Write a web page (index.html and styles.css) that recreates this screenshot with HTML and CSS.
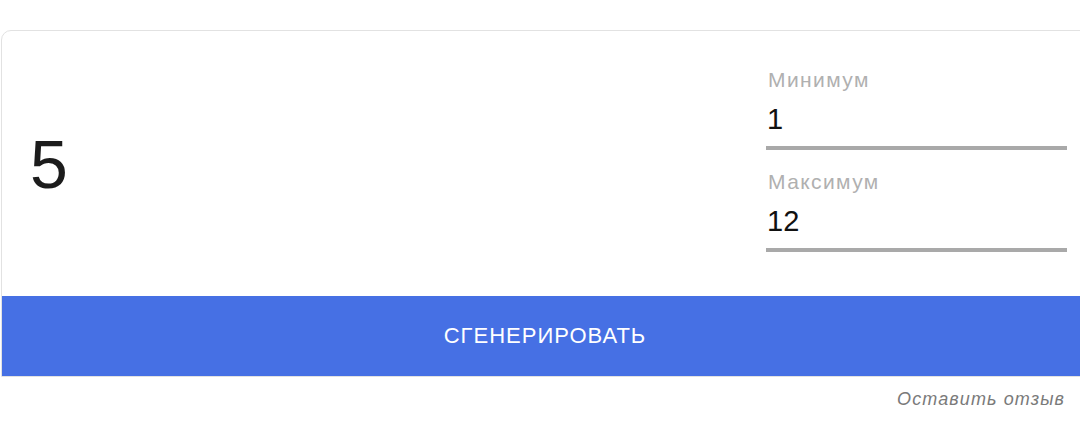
FILE: index.html
```html
<!DOCTYPE html>
<html lang="ru">
<head>
  <meta charset="UTF-8">
  <title>Генератор случайных чисел</title>
  <link rel="stylesheet" href="styles.css">
</head>
<body>

  <div class="page">
    <div class="card">
      <div class="card-body">
        <div class="result" id="result">5</div>

        <div class="range">
          <label class="field">
            <span class="field-label">Минимум</span>
            <input type="text" id="min" value="1">
          </label>
          <label class="field">
            <span class="field-label">Максимум</span>
            <input type="text" id="max" value="12">
          </label>
        </div>
      </div>

      <button class="generate" onclick="generate()">СГЕНЕРИРОВАТЬ</button>
    </div>

    <div class="feedback">
      <a href="#">Оставить отзыв</a>
    </div>
  </div>

  <script>
    function generate() {
      let min = parseInt(document.getElementById("min").value, 10);
      let max = parseInt(document.getElementById("max").value, 10);

      if (isNaN(min) || isNaN(max) || min > max) {
        return;
      }

      let value = Math.floor(Math.random() * (max - min + 1)) + min;
      document.getElementById("result").innerText = value;
    }
  </script>

</body>
</html>
```

FILE: styles.css
```css
html, body {
  margin: 0;
  background: #ffffff;
  overflow: hidden;
}

body {
  font-family: "Liberation Sans", Arial, sans-serif;
  color: #1a1a1a;
}

.page {
  width: 1140px;
  padding-top: 30px;
  padding-left: 1px;
}

.card {
  border: 1px solid #e2e2e2;
  border-radius: 10px 10px 0 0;
  overflow: hidden;
  background: white;
}

.card-body {
  display: flex;
  align-items: center;
  height: 265px;
}

.result {
  flex: 1;
  padding-left: 28px;
  font-size: 68px;
  color: #1c1c1c;
}

.range {
  align-self: flex-start;
  width: 301px;
  margin-top: 37px;
  margin-right: 73px;
  display: flex;
  flex-direction: column;
  gap: 20px;
}

.field {
  display: flex;
  flex-direction: column;
}

.field-label {
  font-size: 21px;
  line-height: 24px;
  letter-spacing: 1.4px;
  color: #b0b0b0;
  padding-left: 2px;
}

.field input {
  font-family: "Liberation Sans", Arial, sans-serif;
  font-size: 29px;
  line-height: 34px;
  height: 34px;
  color: #111;
  border: none;
  border-bottom: 4px solid #a9a9a9;
  padding: 10px 0 10px 1px;
  margin: 0;
  outline: none;
  background: transparent;
}

/* blue button across the card */
.generate {
  display: block;
  width: 100%;
  height: 80px;
  margin: 0;
  border: none;
  background-color: #4670e4;
  color: white;
  font-family: "Liberation Sans", Arial, sans-serif;
  font-size: 22px;
  letter-spacing: 1px;
  padding-right: 58px;
  cursor: pointer;
}

.generate:hover {
  background-color: #3a62d4;
}

.feedback {
  width: 1064px;
  text-align: right;
  padding-top: 12px;
}

.feedback a {
  font-style: italic;
  font-size: 18px;
  letter-spacing: 1.1px;
  color: #7a7a7a;
  text-decoration: none;
}
```
